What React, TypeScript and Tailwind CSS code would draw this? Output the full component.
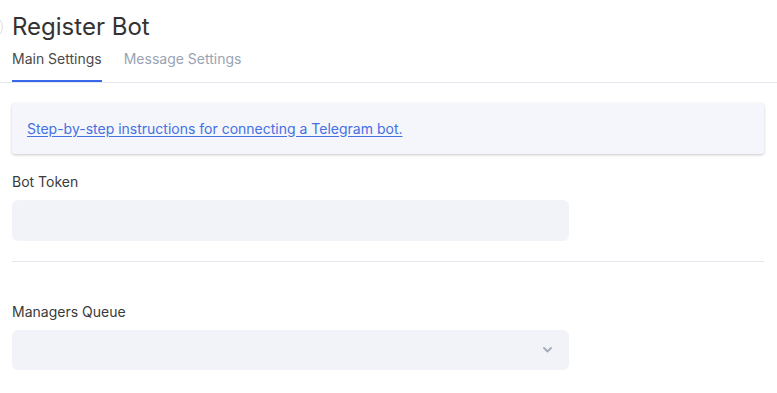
import React from "react";

export default function App() {
  return (
    <div
      className="min-h-[393px] w-[777px] bg-white overflow-hidden"
      style={{ fontFamily: "Inter, 'Noto Sans', sans-serif" }}
    >
      <div className="px-3 pt-[11px]">
        <div className="flex items-center gap-[9px]">
          <div className="-ml-[33px] h-[24px] w-[24px] shrink-0 rounded-full border border-[#dcdde3] bg-white" />
          <h1 className="text-[24px] leading-[32px] font-normal text-[#333333]">Register Bot</h1>
        </div>
      </div>
      <div className="mt-[6px] flex gap-[22px] border-b border-[#e6e6ee] px-3">
        <div className="border-b-2 border-[#3768ea] pb-[11px] text-[14px] leading-[20px] text-[#4a4a4a]">
          Main Settings
        </div>
        <div className="pb-[11px] text-[14px] leading-[20px] text-[#9aa3b5]">Message Settings</div>
      </div>
      <div className="pl-3 pr-[13px] text-[14px] leading-[20px]">
        <div className="mt-[20px] rounded-[3px] bg-[#f4f6fb] px-[15px] py-[15.5px] shadow-[0_1px_3px_rgba(0,0,0,0.22)]">
          <a href="#" className="text-[14px] leading-[20px] text-[#4470e4] underline underline-offset-2">
            Step-by-step instructions for connecting a Telegram bot.
          </a>
        </div>
        <div className="mt-[18px] text-[14px] leading-[20px] text-[#3a3a3a]">Bot Token</div>
        <div className="mt-[8px] h-[41px] w-[557px] rounded-[6px] bg-[#f2f3f8]" />
        <div className="mt-[20px] h-px bg-[#e6e6ee]" />
        <div className="mt-[40px] text-[14px] leading-[20px] text-[#3a3a3a]">Managers Queue</div>
        <div className="mt-[8px] flex h-[40px] w-[557px] items-center justify-end rounded-[6px] bg-[#f2f3f8] pr-[17px]">
          <svg width="9" height="6" viewBox="0 0 9 6" fill="none">
            <path d="M1 1l3.5 3.5L8 1" stroke="#a3abb8" strokeWidth="1.8" strokeLinecap="round" strokeLinejoin="round" />
          </svg>
        </div>
      </div>
    </div>
  );
}
